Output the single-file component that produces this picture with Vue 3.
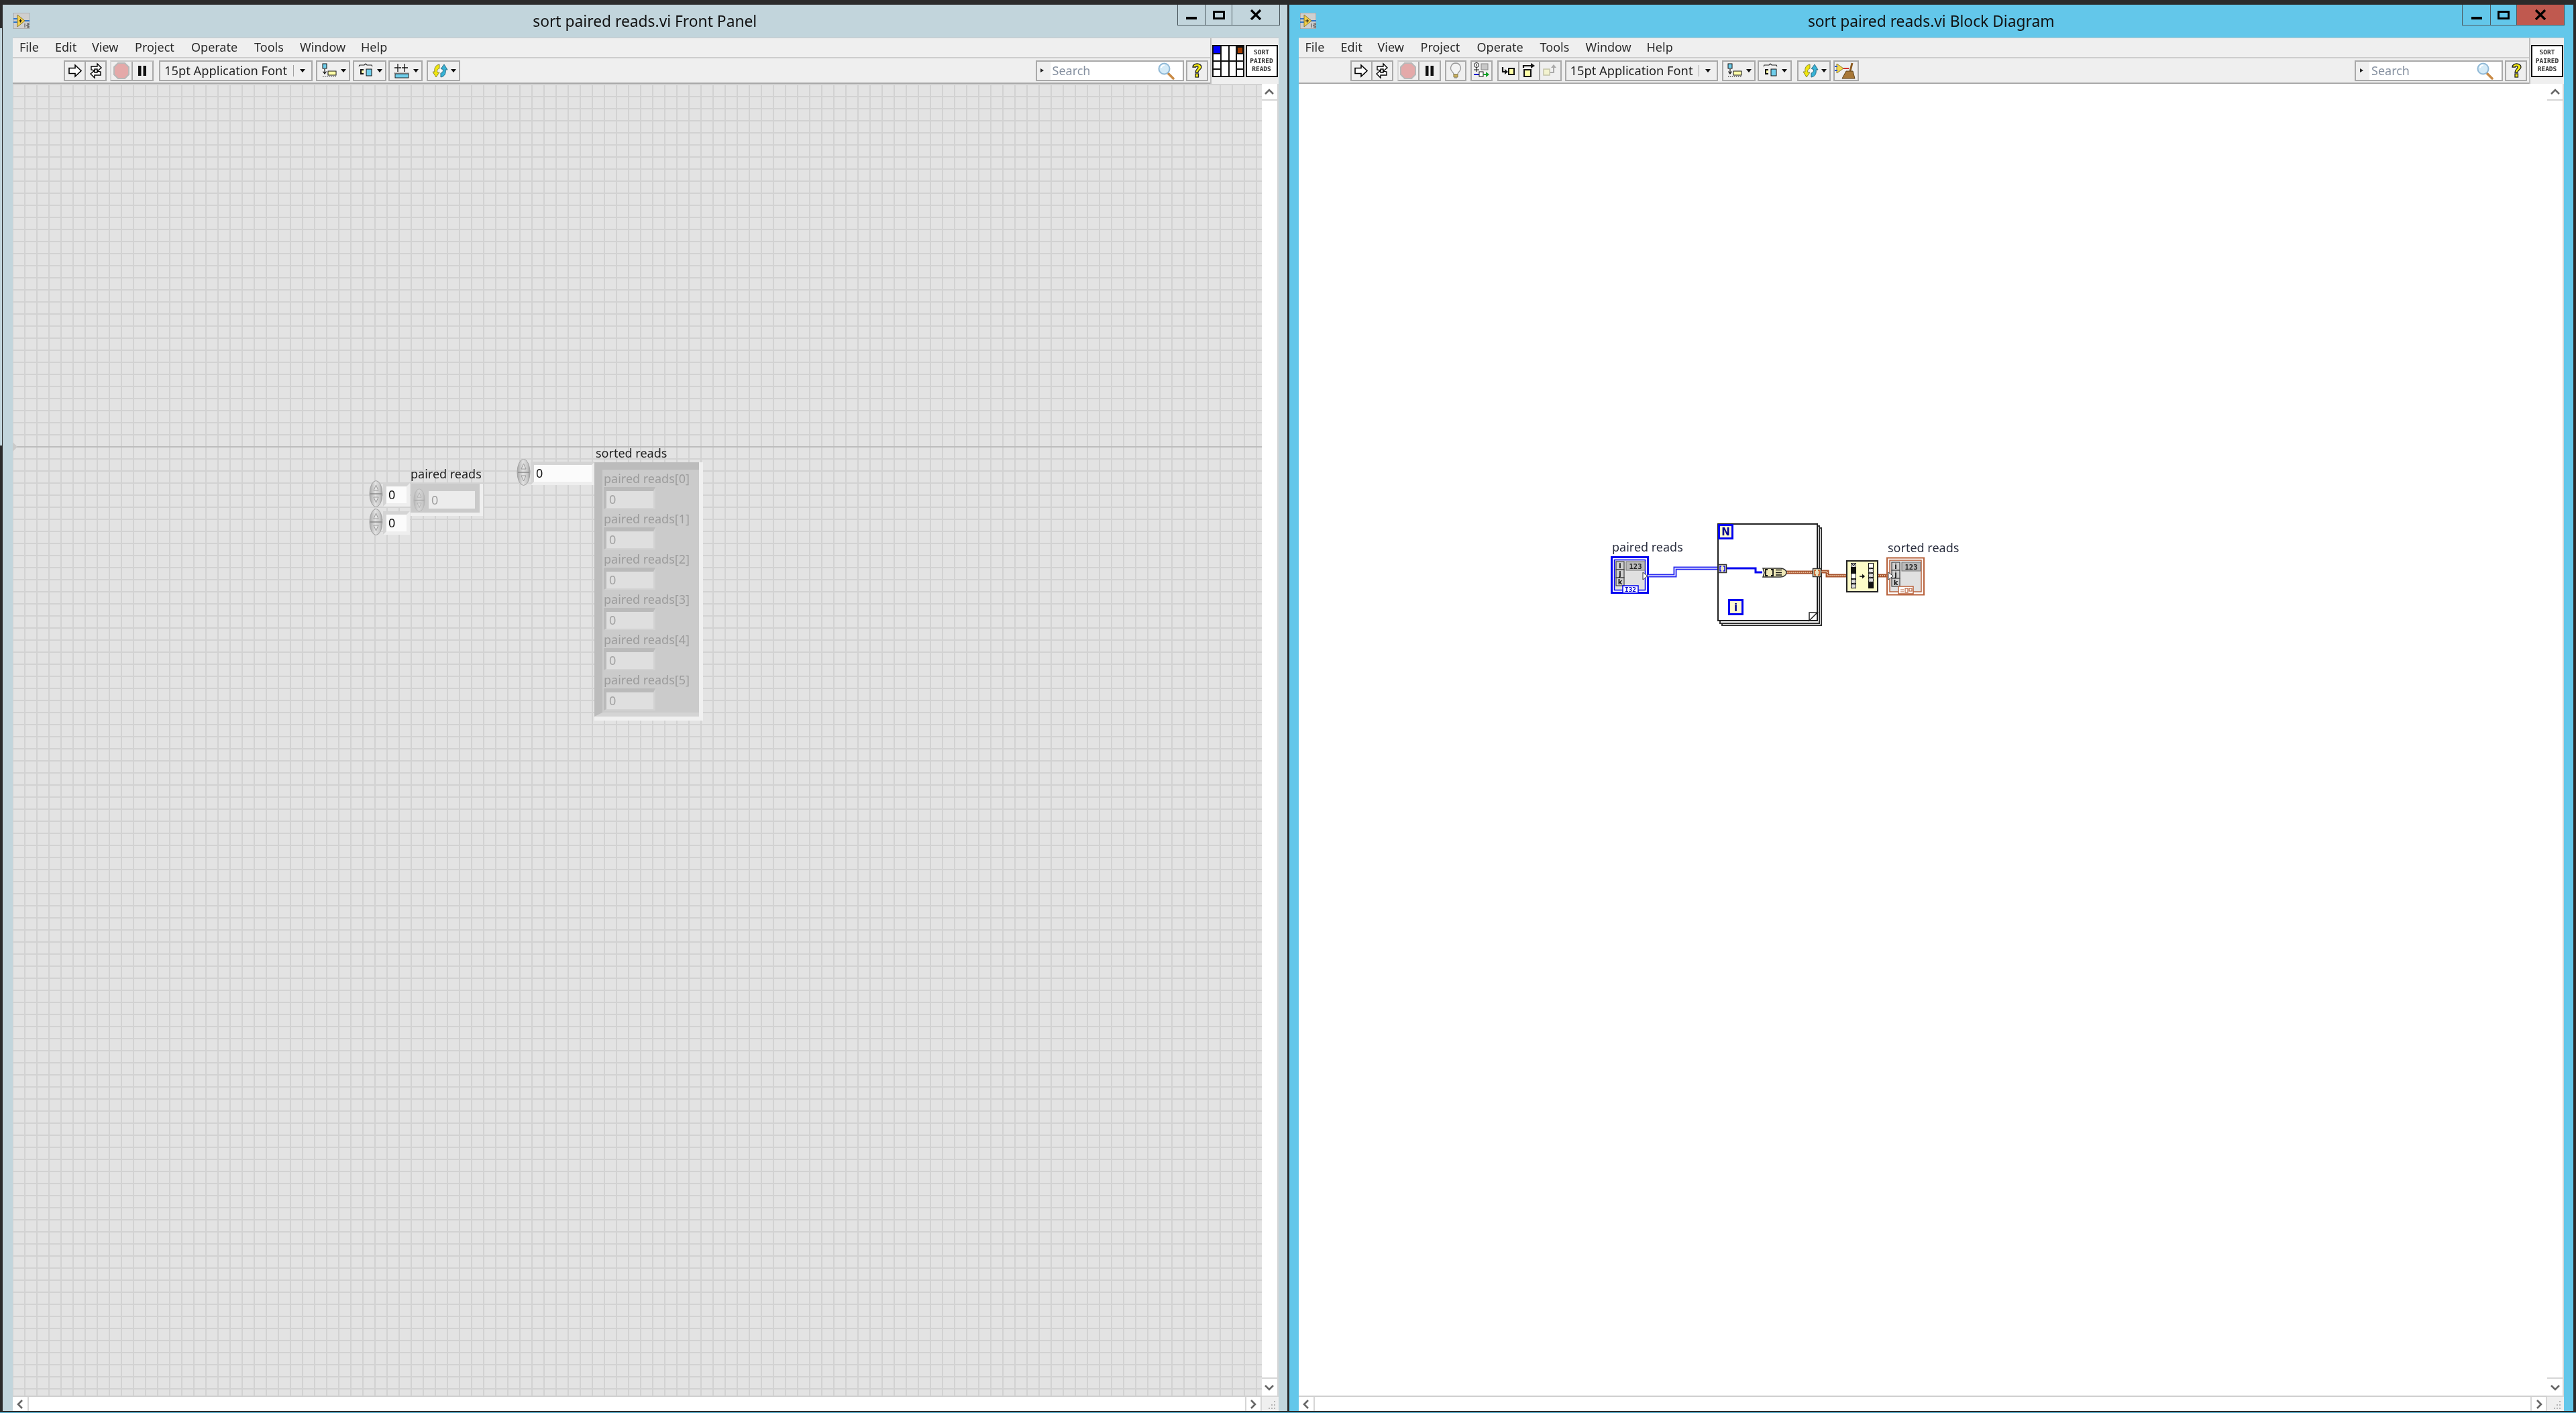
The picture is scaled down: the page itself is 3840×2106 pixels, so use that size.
<script setup>
const menus = [
  ['File', 53], ['Edit', 55], ['View', 64], ['Project', 84],
  ['Operate', 94], ['Tools', 68], ['Window', 91], ['Help', 50]
]
const clusterItems = [0, 1, 2, 3, 4, 5]
</script>

<template>
  <div class="screen">
    <svg class="defs" width="0" height="0" aria-hidden="true">
      <defs>
        <linearGradient id="spinFill" x1="0" y1="0" x2="1" y2="0">
          <stop offset="0" stop-color="#a8a8a8" />
          <stop offset="0.45" stop-color="#e2e2e2" />
          <stop offset="0.8" stop-color="#c8c8c8" />
          <stop offset="1" stop-color="#9c9c9c" />
        </linearGradient>
        <symbol id="spin" viewBox="0 0 21 40">
          <ellipse cx="10.5" cy="20" rx="9.5" ry="19.5" fill="url(#spinFill)" stroke="#a2a2a2" stroke-width="1" />
          <path d="M2 20h17" stroke="#8a8a8a" stroke-width="1.500" />
          <path d="M10.500 7l3.500 8H7z" fill="#e4e4e4" stroke="#8a8a8a" stroke-width=".8" />
          <path d="M10.500 33l3.500-8H7z" fill="#e4e4e4" stroke="#8a8a8a" stroke-width=".8" />
        </symbol>
        <symbol id="vi" viewBox="0 0 24 24">
          <rect width="24" height="24" fill="#cfcfcf" stroke="#8e8e8e" />
          <path d="M0 9h7M0 14h7M15 12h9" stroke="#2c74c9" stroke-width="2" />
          <path d="M6 3l11 9-11 9z" fill="#f2cf4a" stroke="#8a7a2a" />
          <path d="M8 12h5M10.500 9.500v5" stroke="#111" stroke-width="1.200" />
          <path d="M17 16v6M20 16h3v2h-3v2h3v2h-3" stroke="#444" fill="none" />
        </symbol>
        <symbol id="run" viewBox="0 0 28 27">
          <path d="M5 9.500h9V5l9 8.500-9 8.500v-4.500H5z" fill="#fff" stroke="#000" stroke-width="1.600" />
        </symbol>
        <symbol id="cont" viewBox="0 0 28 27">
          <path d="M7 12V7h9V3l6 6-6 5v-3h-4v2z" fill="#fff" stroke="#000" stroke-width="1.400" />
          <path d="M21 15v5h-9v4l-6-6 6-5v3h4v-2z" fill="#fff" stroke="#000" stroke-width="1.400" />
        </symbol>
        <symbol id="abort" viewBox="0 0 28 27">
          <path d="M9 2h10l6 6v11l-6 6H9l-6-6V8z" fill="#e4a9a9" stroke="#b8b8b8" stroke-width="2" />
        </symbol>
        <symbol id="pause" viewBox="0 0 28 27">
          <path d="M8 6h4.500v15H8zM15.500 6H20v15h-4.500z" fill="#111" />
        </symbol>
        <symbol id="align" viewBox="0 0 28 27">
          <rect x="3" y="3" width="6" height="7" fill="#6fcdea" stroke="#111" />
          <path d="M6 11v6M3.500 14.500L6 18l2.500-3.500" stroke="#111" fill="none" stroke-width="1.200" />
          <rect x="11" y="14" width="12" height="6" fill="#ffffa8" stroke="#111" />
          <path d="M3 22.500h20" stroke="#111" stroke-dasharray="1.500 1.500" />
        </symbol>
        <symbol id="dist" viewBox="0 0 28 27">
          <path d="M3 7l1-2h7l2-2 2 2h7l1 2" fill="none" stroke="#222" stroke-width="1.200" />
          <rect x="5" y="11" width="5" height="8" fill="#111" />
          <rect x="7" y="13" width="3" height="4" fill="#ffffa8" />
          <rect x="14" y="11" width="8" height="10" fill="#6fcdea" stroke="#111" />
        </symbol>
        <symbol id="resize" viewBox="0 0 28 27">
          <path d="M2 17h22" stroke="#111" stroke-dasharray="1.500 1.500" />
          <path d="M7 3v12M17 3v12M2 9h5M12 9H8M13 9h4M22 9h-5" stroke="#111" stroke-width="1.300" />
          <rect x="3" y="18" width="20" height="6" fill="#6fcdea" stroke="#222" />
        </symbol>
        <symbol id="reorder" viewBox="0 0 28 27">
          <path d="M13 4C7 5 5 10 6 15H3l5 8 5-7h-3c-1-3 0-5 3-6z" fill="#f1e60e" stroke="#8a8a30" />
          <path d="M15 23c6-1 8-6 7-11h3l-5-8-5 7h3c1 3 0 5-3 6z" fill="#38b3d6" stroke="#2a6d84" />
          <path d="M14 10l4 3-4 3z" fill="#fff" />
        </symbol>
        <symbol id="bulb" viewBox="0 0 28 27">
          <path d="M14 2a7.500 7.500 0 0 0-5 13c1.500 1.500 2 2.500 2 4h6c0-1.500.5-2.500 2-4a7.500 7.500 0 0 0-5-13z" fill="#f4f4f4" stroke="#9a9a9a" stroke-width="1.300" />
          <path d="M11 19h6v4h-6z" fill="#cdb35f" stroke="#8a7a40" />
          <path d="M12 24h4" stroke="#777" />
        </symbol>
        <symbol id="retain" viewBox="0 0 28 27">
          <circle cx="7" cy="5" r="3.500" fill="#fff" stroke="#111" />
          <path d="M7 3v4M7 9v6M3 12h8" stroke="#111" />
          <rect x="14" y="3" width="10" height="9" fill="#c8c8c8" stroke="#888" />
          <path d="M3 19h8" stroke="#1a1ad0" stroke-width="2" />
          <rect x="11" y="15" width="6" height="7" fill="#fff" stroke="#111" />
          <path d="M17 19h5" stroke="#12a028" stroke-width="2" />
          <path d="M21 15l5 4-5 4z" fill="#12a028" />
        </symbol>
        <symbol id="stepin" viewBox="0 0 28 27">
          <path d="M6 8v7h5" fill="none" stroke="#111" stroke-width="2.200" />
          <path d="M9 11l5 4-5 4z" fill="#111" />
          <rect x="15" y="10" width="8" height="9" fill="#ffffa8" stroke="#111" stroke-width="2" />
        </symbol>
        <symbol id="stepover" viewBox="0 0 28 27">
          <rect x="7" y="12" width="10" height="10" fill="#ffffa8" stroke="#111" stroke-width="2" />
          <path d="M6 9V6h12" fill="none" stroke="#111" stroke-width="2.200" />
          <path d="M17 2l6 4-6 4z" fill="#111" />
        </symbol>
        <symbol id="stepout" viewBox="0 0 28 27">
          <rect x="4" y="11" width="9" height="9" fill="#f3f3cf" stroke="#c4c4a8" stroke-width="1.500" />
          <path d="M14 16h5V8" fill="none" stroke="#aaa" stroke-width="2" />
          <path d="M15 9l4-5 4 5z" fill="#aaa" />
        </symbol>
        <symbol id="cleanup" viewBox="0 0 34 27">
          <path d="M3 3l10 7-10 7z" fill="#f4d94e" stroke="#8a7a2a" />
          <path d="M0 7h4M0 13h4" stroke="#2c55d0" stroke-width="2" />
          <path d="M13 10h8" stroke="#d03030" stroke-width="2" />
          <path d="M26 2l-3 12" stroke="#8a5a20" stroke-width="3" />
          <path d="M17 14h10l3 11H11z" fill="#a87838" stroke="#5d4118" />
        </symbol>
        <symbol id="search" viewBox="0 0 28 27">
          <path d="M15 16l9 9" stroke="#c98a45" stroke-width="3.500" stroke-linecap="round" />
          <circle cx="10.500" cy="10.500" r="8" fill="#d4ebf8" stroke="#8fb8d6" stroke-width="2" />
          <path d="M6 9a5 5 0 0 1 5-4" stroke="#fff" stroke-width="2" fill="none" />
        </symbol>
        <symbol id="qmark" viewBox="0 0 28 27">
          <path d="M8 8c0-3 3-5 6.500-5S21 5 21 8c0 4-5 4-5 8h-4c0-5 4-5 4-8 0-2-3-2-3.500 0z" fill="#f6ee12" stroke="#222" stroke-width="1.300" />
          <rect x="12" y="18" width="4.500" height="5" fill="#f6ee12" stroke="#222" stroke-width="1.300" />
        </symbol>
        <symbol id="grip" viewBox="0 0 23 23">
          <path d="M18 6h2v2h-2zM14 11h2v2h-2zM18 11h2v2h-2zM10 16h2v2h-2zM14 16h2v2h-2zM18 16h2v2h-2z" fill="#b5b5b5" />
        </symbol>
        <symbol id="connector" viewBox="0 0 48 48">
          <rect x="1" y="1" width="46" height="46" fill="#fff" stroke="#111" stroke-width="2" />
          <rect x="2" y="2" width="11" height="11" fill="#0000ff" />
          <rect x="36" y="2" width="10" height="11" fill="#111" />
          <rect x="38" y="4" width="7" height="8" fill="#a33c00" />
          <path d="M13 1v46M25 1v46M36 1v46M1 24h46M1 13h12M36 13h11M1 36h12M36 36h11" stroke="#111" stroke-width="2" fill="none" />
        </symbol>
      </defs>
    </svg>

    <div class="sliver"></div>

    <div class="windows">
      <!-- Front panel window -->
      <section class="window panel-window">
        <header class="titlebar">
          <svg class="vi-icon"><use href="#vi" /></svg>
          <h1 class="title">sort paired reads.vi Front Panel</h1>
          <div class="controls">
            <span class="ctl ctl-min"><i></i></span>
            <span class="ctl ctl-max"><i></i></span>
            <span class="ctl ctl-close">
              <svg width="18" height="16" viewBox="0 0 18 16"><path d="M2 1l14 14M16 1L2 15" stroke="#000" stroke-width="3.400" /></svg>
            </span>
          </div>
        </header>

        <div class="head">
          <div class="head-main">
            <nav class="menubar">
              <span v-for="m in menus" :key="m[0]" class="menu" :style="{ width: m[1] + 'px' }">{{ m[0] }}</span>
            </nav>
            <div class="toolbar tb-panel">
              <div class="tg w64">
                <span class="tb"><svg class="ic"><use href="#run" /></svg></span>
                <span class="tb sep"><svg class="ic"><use href="#cont" /></svg></span>
              </div>
              <div class="tg w65 g5 dim-first">
                <span class="tb"><svg class="ic"><use href="#abort" /></svg></span>
                <span class="tb sep"><svg class="ic"><use href="#pause" /></svg></span>
              </div>
              <div class="fontbox w229 g8"><span class="fontname">15pt Application Font</span><span class="fontcaret"><b class="caret"></b></span></div>
              <div class="tg w51 g5"><span class="tb"><svg class="ic"><use href="#align" /></svg><b class="caret"></b></span></div>
              <div class="tg w50 g4"><span class="tb"><svg class="ic"><use href="#dist" /></svg><b class="caret"></b></span></div>
              <div class="tg w51 g3"><span class="tb"><svg class="ic"><use href="#resize" /></svg><b class="caret"></b></span></div>
              <div class="tg w50 g6"><span class="tb"><svg class="ic"><use href="#reorder" /></svg><b class="caret"></b></span></div>
              <div class="searchbox">
                <span class="search-mode"><b class="mini"></b></span>
                <span class="search-text">Search</span>
                <svg class="ic search-ic"><use href="#search" /></svg>
              </div>
              <div class="helpbtn"><svg class="ic"><use href="#qmark" /></svg></div>
            </div>
          </div>
          <div class="identity id-panel">
            <svg class="connector"><use href="#connector" /></svg>
            <div class="vi-glyph"><span>SORT</span><span>PAIRED</span><span>READS</span></div>
          </div>
        </div>

        <div class="body">
          <div class="canvas grid">
            <div class="origin"></div>
            <div class="origin-mark"></div>

            <div class="num n1">
              <svg class="spin"><use href="#spin" /></svg>
              <div class="frame"><div class="field f-small">0</div></div>
            </div>
            <div class="num n2">
              <svg class="spin"><use href="#spin" /></svg>
              <div class="frame"><div class="field f-small">0</div></div>
            </div>
            <div class="lbl l-paired">paired reads</div>
            <div class="array">
              <svg class="spin dimspin"><use href="#spin" /></svg>
              <div class="array-field">0</div>
            </div>

            <div class="num n3">
              <svg class="spin"><use href="#spin" /></svg>
              <div class="frame"><div class="field f-wide">0</div></div>
            </div>
            <div class="lbl l-sorted">sorted reads</div>
            <div class="cluster">
              <div v-for="i in clusterItems" :key="i" class="c-item">
                <div class="c-label">paired reads[{{ i }}]</div>
                <div class="c-field"><span>0</span></div>
              </div>
            </div>
          </div>
          <div class="vbar">
            <span class="sb-btn sb-up"><svg width="16" height="10" viewBox="0 0 16 10"><path d="M2 8l6-6 6 6" class="chev" /></svg></span>
            <span class="sb-fill"></span>
            <span class="sb-btn sb-down"><svg width="16" height="10" viewBox="0 0 16 10"><path d="M2 2l6 6 6-6" class="chev" /></svg></span>
          </div>
          <div class="hbar">
            <span class="sb-btn sb-left"><svg width="10" height="16" viewBox="0 0 10 16"><path d="M8 2L2 8l6 6" class="chev" /></svg></span>
            <span class="sb-fill"></span>
            <span class="sb-btn sb-right"><svg width="10" height="16" viewBox="0 0 10 16"><path d="M2 2l6 6-6 6" class="chev" /></svg></span>
          </div>
          <div class="corner"><svg width="23" height="23"><use href="#grip" /></svg></div>
        </div>
      </section>

      <!-- Block diagram window -->
      <section class="window diagram-window">
        <header class="titlebar">
          <svg class="vi-icon"><use href="#vi" /></svg>
          <h1 class="title">sort paired reads.vi Block Diagram</h1>
          <div class="controls">
            <span class="ctl ctl-min"><i></i></span>
            <span class="ctl ctl-max"><i></i></span>
            <span class="ctl ctl-close red">
              <svg width="18" height="16" viewBox="0 0 18 16"><path d="M2 1l14 14M16 1L2 15" stroke="#000" stroke-width="3.400" /></svg>
            </span>
          </div>
        </header>

        <div class="head">
          <div class="head-main">
            <nav class="menubar">
              <span v-for="m in menus" :key="m[0]" class="menu" :style="{ width: m[1] + 'px' }">{{ m[0] }}</span>
            </nav>
            <div class="toolbar tb-diagram">
              <div class="tg w64">
                <span class="tb"><svg class="ic"><use href="#run" /></svg></span>
                <span class="tb sep"><svg class="ic"><use href="#cont" /></svg></span>
              </div>
              <div class="tg w65 g6 dim-first">
                <span class="tb"><svg class="ic"><use href="#abort" /></svg></span>
                <span class="tb sep"><svg class="ic"><use href="#pause" /></svg></span>
              </div>
              <div class="tg w32 g6"><span class="tb"><svg class="ic"><use href="#bulb" /></svg></span></div>
              <div class="tg w33 g6"><span class="tb"><svg class="ic"><use href="#retain" /></svg></span></div>
              <div class="tg w96 g7">
                <span class="tb"><svg class="ic"><use href="#stepin" /></svg></span>
                <span class="tb sep"><svg class="ic"><use href="#stepover" /></svg></span>
                <span class="tb sep"><svg class="ic"><use href="#stepout" /></svg></span>
              </div>
              <div class="fontbox w228 g5"><span class="fontname">15pt Application Font</span><span class="fontcaret"><b class="caret"></b></span></div>
              <div class="tg w50 g6"><span class="tb"><svg class="ic"><use href="#align" /></svg><b class="caret"></b></span></div>
              <div class="tg w51 g3"><span class="tb"><svg class="ic"><use href="#dist" /></svg><b class="caret"></b></span></div>
              <div class="tg w50 g8"><span class="tb"><svg class="ic"><use href="#reorder" /></svg><b class="caret"></b></span></div>
              <div class="tg w38 g4"><span class="tb"><svg class="ic-wide"><use href="#cleanup" /></svg></span></div>
              <div class="searchbox">
                <span class="search-mode"><b class="mini"></b></span>
                <span class="search-text">Search</span>
                <svg class="ic search-ic"><use href="#search" /></svg>
              </div>
              <div class="helpbtn"><svg class="ic"><use href="#qmark" /></svg></div>
            </div>
          </div>
          <div class="identity id-diagram">
            <div class="vi-glyph"><span>SORT</span><span>PAIRED</span><span>READS</span></div>
          </div>
        </div>

        <div class="body">
          <div class="canvas white">
            <svg class="diagram" viewBox="2380 770 560 170" width="560" height="170">
              <!-- paired reads terminal -->
              <text x="2402" y="822" class="dia-label">paired reads</text>
              <rect x="2401.500" y="830.500" width="54" height="53" fill="#fff" stroke="#0000f0" stroke-width="3" />
              <rect x="2405.500" y="834.500" width="46" height="45" fill="#e0e0e0" stroke="#0000f0" stroke-width="1.500" />
              <g class="ijk">
                <rect x="2408" y="837" width="12" height="12" /><rect x="2408" y="849" width="12" height="12" /><rect x="2408" y="861" width="12" height="12" />
                <text x="2414" y="847">i</text><text x="2414" y="859">j</text><text x="2414" y="871">k</text>
              </g>
              <rect x="2423" y="837" width="28" height="13" fill="#b9b9b9" stroke="#777" />
              <text x="2437" y="848" class="t123">123</text>
              <path d="M2448 853l7 5.500-7 5.500z" fill="#fff" stroke="#333" />
              <rect x="2418" y="873" width="23" height="11" fill="#fff" stroke="#0000f0" stroke-width="1.500" />
              <text x="2429.500" y="882" class="ti32">I32</text>

              <!-- blue double wire -->
              <path d="M2455 858h41v-11h64" class="w-blue" />
              <path d="M2455 858h41v-11h64" class="w-white" />

              <!-- for loop -->
              <rect x="2566" y="787" width="148" height="145" fill="#fff" stroke="#333" stroke-width="2" />
              <rect x="2563" y="784" width="148" height="145" fill="#fff" stroke="#333" stroke-width="2" />
              <rect x="2560" y="781" width="148" height="144" fill="#fff" stroke="#222" stroke-width="2" />
              <path d="M2696 925v-12h12z" fill="#fff" stroke="#222" stroke-width="1.500" />
              <rect x="2561.500" y="782.500" width="20" height="20" fill="#fffbd0" stroke="#0000f0" stroke-width="3" />
              <text x="2571.500" y="798" class="t-nn">N</text>
              <rect x="2576.500" y="894.500" width="20" height="21" fill="#fffbd0" stroke="#0000f0" stroke-width="3" />
              <text x="2586.500" y="911" class="t-nn">i</text>

              <!-- inside wires -->
              <path d="M2573 847h43v6h10" fill="none" stroke="#0000f0" stroke-width="3" />
              <path d="M2662 853h40" class="w-brown" />
              <path d="M2662 853h40" class="w-pink" />
              <path d="M2714 852h9v6h28" class="w-brown" />
              <path d="M2714 852h9v6h28" class="w-pink" />
              <path d="M2798 858h14" class="w-brown" />
              <path d="M2798 858h14" class="w-pink" />

              <!-- tunnels -->
              <rect x="2560.500" y="841.500" width="12" height="12" fill="#e9e4c3" stroke="#333" stroke-width="1.500" />
              <path d="M2565 844h-2v7h2M2568 844h2v7h-2" fill="none" stroke="#0000f0" stroke-width="1.400" />
              <rect x="2701.500" y="847.500" width="12" height="12" fill="#e9e4c3" stroke="#333" stroke-width="1.500" />
              <path d="M2706 850h-2v7h2M2709 850h2v7h-2" fill="none" stroke="#c34a10" stroke-width="1.400" />

              <!-- index node -->
              <path d="M2627 847h26c5 0 9 3 9 6.500s-4 6.500-9 6.500h-26l2-6.500z" fill="#efe9b8" stroke="#333" stroke-width="1.500" />
              <path d="M2634 849h-3v9h3M2639 849h3v9h-3" fill="none" stroke="#111" stroke-width="1.800" />
              <path d="M2646 849.500h9M2646 853.500h9M2646 857h9" stroke="#111" stroke-width="1.300" />

              <!-- sort node -->
              <rect x="2752" y="836" width="46" height="46" fill="#fdfcc8" stroke="#222" stroke-width="2" />
              <rect x="2758" y="839" width="8" height="38" fill="#111" />
              <rect x="2759" y="840" width="6" height="5" fill="#fff" /><path d="M2760 841l4 3M2764 841l-4 3" stroke="#111" />
              <rect x="2759" y="855" width="6" height="7" fill="#fff" />
              <rect x="2759" y="864" width="6" height="5" fill="#ddd" stroke="#777" stroke-dasharray="1 1" />
              <rect x="2759" y="871" width="6" height="5" fill="#ddd" stroke="#777" stroke-dasharray="1 1" />
              <rect x="2784" y="839" width="8" height="38" fill="#111" />
              <rect x="2785" y="840" width="6" height="6" fill="#fff" />
              <rect x="2785" y="848" width="6" height="5" fill="#eee" stroke="#777" stroke-dasharray="1 1" />
              <rect x="2785" y="855" width="6" height="5" fill="#ddd" stroke="#777" stroke-dasharray="1 1" />
              <rect x="2785" y="862" width="6" height="5" fill="#ddd" stroke="#777" stroke-dasharray="1 1" />
              <path d="M2771 859h7" stroke="#111" stroke-width="1.600" /><path d="M2775 855.500l4 3.500-4 3.500z" fill="#111" />

              <!-- sorted reads terminal -->
              <text x="2813" y="823" class="dia-label">sorted reads</text>
              <rect x="2812" y="831.500" width="55" height="55" fill="#fff" stroke="#b8623c" stroke-width="2" />
              <rect x="2816" y="835" width="47" height="47" fill="#e0e0e0" stroke="#b8623c" stroke-width="1.500" />
              <g class="ijk">
                <rect x="2819" y="838" width="12" height="12" /><rect x="2819" y="850" width="12" height="12" /><rect x="2819" y="862" width="12" height="12" />
                <text x="2825" y="848">i</text><text x="2825" y="860">j</text><text x="2825" y="872">k</text>
              </g>
              <rect x="2834" y="838" width="28" height="13" fill="#b9b9b9" stroke="#777" />
              <text x="2848" y="849" class="t123">123</text>
              <path d="M2814 853l7 5.500-7 5.500z" fill="#fff" stroke="#333" />
              <rect x="2829" y="874" width="22" height="11" fill="#fff" stroke="#b8623c" stroke-width="1.500" />
              <path d="M2832 879h5M2832 882h5" stroke="#b8623c" stroke-width="1.200" /><rect x="2839" y="877" width="4" height="6" fill="none" stroke="#b8623c" stroke-width="1.200" /><rect x="2845" y="877" width="4" height="4" fill="none" stroke="#b8623c" stroke-width="1.200" />
            </svg>
          </div>
          <div class="vbar">
            <span class="sb-btn sb-up"><svg width="16" height="10" viewBox="0 0 16 10"><path d="M2 8l6-6 6 6" class="chev" /></svg></span>
            <span class="sb-fill"></span>
            <span class="sb-btn sb-down"><svg width="16" height="10" viewBox="0 0 16 10"><path d="M2 2l6 6 6-6" class="chev" /></svg></span>
          </div>
          <div class="hbar">
            <span class="sb-btn sb-left"><svg width="10" height="16" viewBox="0 0 10 16"><path d="M8 2L2 8l6 6" class="chev" /></svg></span>
            <span class="sb-fill"></span>
            <span class="sb-btn sb-right"><svg width="10" height="16" viewBox="0 0 10 16"><path d="M2 2l6 6-6 6" class="chev" /></svg></span>
          </div>
          <div class="corner"><svg width="23" height="23"><use href="#grip" /></svg></div>
        </div>
      </section>
    </div>
    <div class="bottom-strip"></div>
  </div>
</template>

<style scoped>
.screen {
  position: relative;
  width: 3840px;
  height: 2106px;
  overflow: hidden;
  background: #2b2b2b;
  font-family: "Noto Sans", "Open Sans", sans-serif;
  font-size: 18px;
  color: #222;
  display: flex;
  flex-direction: column;
  filter: blur(0.45px);
}
.defs { position: absolute; }
.sliver {
  position: absolute;
  left: 0;
  top: 42px;
  width: 3px;
  height: 622px;
  background: #c2d5dc;
}
.windows {
  flex: 1;
  display: flex;
  padding: 7px 4px 0 4px;
  gap: 3px;
  min-height: 0;
}
.window {
  width: 1914.5px;
  flex: none;
  display: flex;
  flex-direction: column;
  min-height: 0;
}
.panel-window { background: #c2d5dc; padding: 0 13px 0 15px; box-sizing: border-box; }
.diagram-window { background: #63c7ea; padding: 0 14px; box-sizing: border-box; flex: 1; }
.bottom-strip { height: 1px; margin-top: 2px; background: #63c7ea; }

/* title bar */
.titlebar {
  position: relative;
  height: 49px;
  flex: none;
  display: flex;
  align-items: center;
  justify-content: center;
  margin: 0 -13px 0 -15px;
}
.diagram-window .titlebar { margin: 0 -14px; }
.vi-icon { position: absolute; left: 16px; top: 12px; width: 24px; height: 24px; }
.title {
  margin: 0;
  font-size: 22.800px;
  font-weight: 400;
  line-height: 28px;
  color: #111;
}
.controls {
  position: absolute;
  top: 0;
  right: 11px;
  height: 31px;
  display: flex;
  border: 1px solid #4d5a60;
  border-top: 0;
  box-sizing: border-box;
}
.diagram-window .controls { right: 13px; }
.ctl { display: flex; align-items: flex-start; justify-content: center; box-sizing: border-box; }
.ctl-min { width: 42px; border-right: 1px solid #4d5a60; }
.ctl-min i { width: 16px; height: 4px; margin-top: 18px; background: #000; }
.ctl-max { width: 39px; border-right: 1px solid #4d5a60; }
.ctl-max i { width: 18px; height: 13px; margin-top: 9px; border: 3px solid #000; box-sizing: border-box; }
.ctl-close { width: 70px; padding-top: 7px; }
.red { background: #c0594f; }

/* head: menu + toolbar + vi identity */
.head {
  flex: none;
  height: 69px;
  display: flex;
  background: #efefef;
  border-top: 1px solid #c8c8c8;
  box-sizing: border-box;
}
.head-main { flex: 1; display: flex; flex-direction: column; min-width: 0; }
.menubar {
  height: 30px;
  flex: none;
  display: flex;
  align-items: center;
  padding: 0 0 2px 10px;
  box-sizing: border-box;
  border-bottom: 2px solid #cdcdcd;
}
.menu { line-height: 24px; color: #2a2a2a; font-size: 18px; }
.toolbar {
  flex: 1;
  display: flex;
  align-items: center;
  border-bottom: 2px solid #a9a9a9;
  padding-right: 3px;
  box-sizing: border-box;
}
.tb-panel { padding-left: 76px; }
.tb-diagram { padding-left: 77px; }
.tg {
  height: 31px;
  flex: none;
  display: flex;
  border: 2px solid #a9a9a9;
  box-sizing: border-box;
  background: #efefef;
}
.tb { flex: 1; display: flex; align-items: center; justify-content: center; min-width: 0; }
.tb.sep { border-left: 2px solid #a9a9a9; }
.dim-first { border-color: #c6c6c6 #a9a9a9 #a9a9a9 #d8d8d8; }
.ic { width: 28px; height: 27px; flex: none; }
.ic-wide { width: 34px; height: 27px; flex: none; }
.caret {
  width: 0; height: 0; flex: none;
  margin-left: 2px;
  border-left: 4px solid transparent;
  border-right: 4px solid transparent;
  border-top: 5px solid #111;
}
.w32 { width: 32px; } .w33 { width: 33px; } .w38 { width: 38px; }
.w50 { width: 50px; } .w51 { width: 51px; } .w64 { width: 64px; } .w65 { width: 65px; }
.w96 { width: 96px; } .w228 { width: 228px; } .w229 { width: 229px; }
.g3 { margin-left: 3px; } .g4 { margin-left: 4px; } .g5 { margin-left: 5px; }
.g6 { margin-left: 6px; } .g7 { margin-left: 7px; } .g8 { margin-left: 8px; }
.fontbox {
  height: 31px;
  flex: none;
  display: flex;
  align-items: center;
  justify-content: space-between;
  border: 2px solid #a9a9a9;
  box-sizing: border-box;
  padding-left: 6px;
}
.fontname { font-size: 18.300px; line-height: 24px; color: #222; white-space: nowrap; }
.fontcaret {
  width: 26px;
  height: 17px;
  display: flex;
  align-items: center;
  justify-content: center;
  border-left: 1px solid #a0a0a0;
}
.fontcaret .caret { margin-left: 0; }
.searchbox {
  margin-left: auto;
  width: 221px;
  height: 31px;
  flex: none;
  display: flex;
  align-items: center;
  border: 2px solid #a9a9a9;
  box-sizing: border-box;
  background: #fff;
}
.search-mode {
  width: 20px;
  height: 100%;
  flex: none;
  display: flex;
  align-items: center;
  justify-content: center;
  background: #efefef;
}
.mini {
  width: 0; height: 0;
  border-top: 3.500px solid transparent;
  border-bottom: 3.500px solid transparent;
  border-left: 5px solid #222;
  padding-right: 4px;
}
.search-text { padding-left: 3px; flex: 1; font-size: 18px; line-height: 24px; color: #8590a0; }
.search-ic { margin-right: 10px; }
.helpbtn {
  width: 33px;
  height: 31px;
  margin-left: 3px;
  flex: none;
  display: flex;
  align-items: center;
  justify-content: center;
  border: 2px solid #a9a9a9;
  box-sizing: border-box;
}
.identity {
  flex: none;
  display: flex;
  align-items: center;
  gap: 2px;
  border-left: 2px solid #bdbdbd;
  box-sizing: border-box;
  padding: 0 0 0 1px;
}
.id-panel { width: 102px; }
.id-diagram { width: 52px; }
.connector { width: 48px; height: 48px; flex: none; }
.vi-glyph {
  width: 48px;
  height: 48px;
  flex: none;
  background: #fff;
  border: 2px solid #111;
  box-sizing: border-box;
  display: flex;
  flex-direction: column;
  align-items: center;
  justify-content: center;
  font-family: "DejaVu Sans Mono", "Liberation Mono", monospace;
  font-weight: 700;
  font-size: 9.500px;
  line-height: 12.500px;
  color: #333;
}

/* body */
.body {
  flex: 1;
  min-height: 0;
  display: grid;
  grid-template-columns: 1fr 25px;
  grid-template-rows: 1fr 23px;
}
.canvas { position: relative; overflow: hidden; min-width: 0; min-height: 0; }
.white { background: #fff; }
.grid {
  background-color: #e3e3e3;
  background-image:
    linear-gradient(to right, #d2d2d2 2px, transparent 2px),
    linear-gradient(to bottom, #d2d2d2 2px, transparent 2px);
  background-size: 18px 18px;
  background-position: -1px 0;
}
.origin { position: absolute; left: 0; right: 0; top: 540px; height: 2px; background: #bdbdbd; }
.origin-mark {
  position: absolute;
  left: 0;
  top: 534px;
  width: 0;
  height: 0;
  border-top: 7px solid transparent;
  border-bottom: 7px solid transparent;
  border-left: 7px solid #cacaca;
}
.vbar {
  display: flex;
  flex-direction: column;
  background: #fff;
  border-right: 2px solid #d6d6d6;
  box-sizing: border-box;
}
.hbar {
  display: flex;
  background: #fff;
  border-top: 2px solid #cfcfcf;
  box-sizing: border-box;
}
.sb-fill { flex: 1; }
.sb-btn { display: flex; align-items: center; justify-content: center; flex: none; box-sizing: border-box; }
.sb-up { height: 25px; border-bottom: 2px solid #d6d6d6; }
.sb-down { height: 27px; border-top: 2px solid #d6d6d6; border-bottom: 0; }
.sb-left { width: 24px; border-right: 2px solid #d6d6d6; }
.sb-right { width: 25px; border-left: 2px solid #d6d6d6; border-right: 2px solid #d6d6d6; }
.chev { fill: none; stroke: #666; stroke-width: 2.600; }
.corner { background: #efefef; border-top: 2px solid #d6d6d6; box-sizing: border-box; }
.corner svg { display: block; }

/* front panel controls */
.num { position: absolute; display: flex; align-items: center; }
.n1 { left: 531px; top: 591px; }
.n2 { left: 531px; top: 633px; }
.n3 { left: 751px; top: 559px; }
.spin { width: 21px; height: 40px; flex: none; }
.frame {
  margin-top: 3px;
  border-style: solid;
  border-width: 5px;
  border-color: #d4d4d4 #eeeeee #eeeeee #d4d4d4;
}
.field {
  height: 25px;
  background: #fbfbfb;
  font-size: 18px;
  line-height: 25px;
  color: #111;
  padding-left: 3px;
  box-sizing: border-box;
}
.f-small { width: 30px; }
.f-wide { width: 86px; }
.lbl { position: absolute; font-size: 18px; line-height: 24px; color: #222; white-space: nowrap; }
.l-paired { left: 593px; top: 569px; }
.l-sorted { left: 869px; top: 538px; }
.array {
  position: absolute;
  left: 593px;
  top: 596px;
  width: 108px;
  height: 48px;
  box-sizing: border-box;
  display: flex;
  align-items: center;
  gap: 5px;
  padding: 5px 7px 0 4px;
  background: #cacaca;
  border-right: 5px solid #efefef;
  border-bottom: 5px solid #efefef;
}
.dimspin { width: 18px; height: 37px; opacity: 0.55; }
.array-field {
  flex: 1;
  height: 26px;
  background: #ececec;
  font-size: 18px;
  line-height: 26px;
  color: #a0a0a0;
  padding-left: 4px;
}
.cluster {
  position: absolute;
  left: 867px;
  top: 564px;
  width: 156px;
  height: 379px;
  box-sizing: border-box;
  background: #cbcbcb;
  border-style: solid;
  border-width: 11px 0 6px 12px;
  border-color: #bcbcbc transparent #d4d4d4 #bcbcbc;
  box-shadow: 6px 0 0 #f0f0f0, 0 6px 0 #f0f0f0, 6px 6px 0 #f0f0f0;
  padding-left: 2px;
  display: flex;
  flex-direction: column;
}
.c-item { height: 60px; flex: none; }
.c-label { height: 26px; font-size: 18px; line-height: 26px; color: #9c9c9c; white-space: nowrap; }
.c-field {
  width: 77px;
  height: 33px;
  box-sizing: border-box;
  border-style: solid;
  border-width: 6px 3px 2px 4px;
  border-color: #bababa #d2d2d2 #d2d2d2 #bababa;
  background: #dfdfdf;
  font-size: 18px;
  line-height: 25px;
  color: #a2a2a2;
  padding-left: 4px;
}

/* diagram */
.diagram { position: absolute; left: 445px; top: 645px; overflow: visible; }
.dia-label { font-family: "Noto Sans", sans-serif; font-size: 18px; fill: #2c3040; }
.ijk rect { fill: #cfcfcf; stroke: #444; stroke-width: 1.200; }
.ijk text { font-family: "DejaVu Sans", sans-serif; font-size: 10px; font-weight: 700; fill: #111; text-anchor: middle; }
.t123 { font-family: "DejaVu Sans Mono", monospace; font-size: 10.500px; font-weight: 700; fill: #222; text-anchor: middle; }
.ti32 { font-family: "DejaVu Sans Mono", monospace; font-size: 9.500px; font-weight: 700; fill: #0000d8; text-anchor: middle; }
.t-nn { font-family: "DejaVu Sans", sans-serif; font-size: 15px; font-weight: 700; fill: #00008f; text-anchor: middle; }
.w-blue { fill: none; stroke: #2b2bf0; stroke-width: 5; }
.w-white { fill: none; stroke: #e8e8ff; stroke-width: 1.400; }
.w-brown { fill: none; stroke: #a4502a; stroke-width: 5; }
.w-pink { fill: none; stroke: #f3cfae; stroke-width: 1.500; stroke-dasharray: 2 1; }
</style>

<style>
html, body { margin: 0; background: #2b2b2b; }
</style>
